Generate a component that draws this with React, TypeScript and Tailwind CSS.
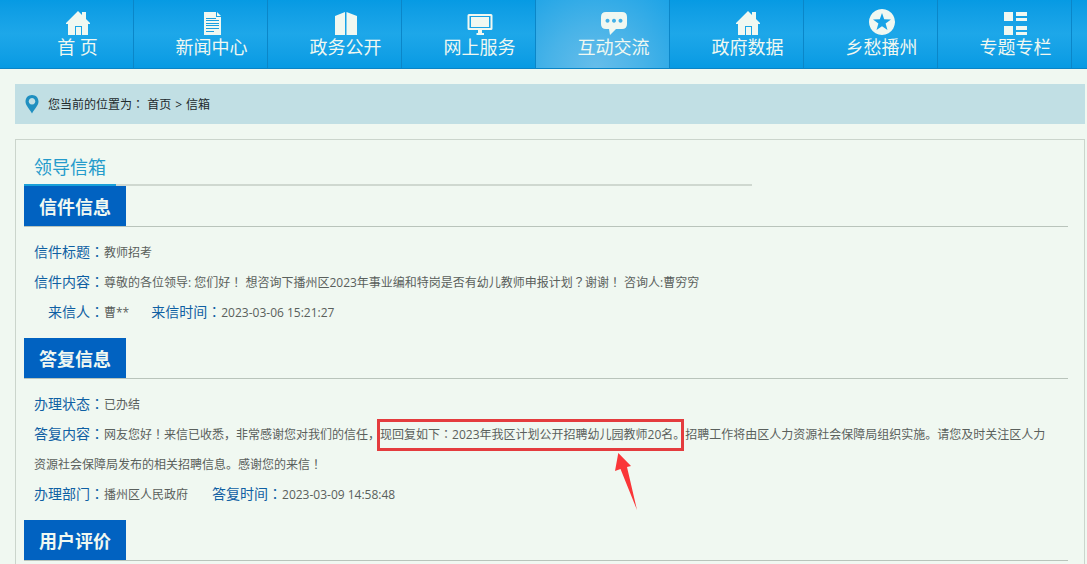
import { Fragment, type ReactNode } from "react";
import clsx from "clsx";

const HOME_ICON = (
  <path
    fillRule="evenodd"
    d="M13 2 L17 6 V3 H21 V10 L25 14 V15 H23 V26 H3 V15 H1 V14 Z M10 17 V26 H11 V18 H16 V26 H17 V17 Z"
  />
);

const NAV_ITEMS: { label: string; icon: ReactNode; active?: boolean }[] = [
  { label: "首 页", icon: HOME_ICON },
  {
    label: "新闻中心",
    icon: (
      <>
        <path d="M5 3 H17 V8 H22 V26 H5 Z M18 3 L22 7 H18 Z" />
        <path
          d="M7 9.5 H17 M7 11.5 H20 M7 14.5 H20 M7 16.5 H20 M7 19.5 H20 M7 22.5 H15"
          stroke="#1a9fe0"
          strokeWidth="1"
        />
      </>
    ),
  },
  {
    label: "政务公开",
    icon: <path d="M2 7 L12 3 V26 H2 Z M13.5 3 L24 7 V26 H13.5 Z" />,
  },
  {
    label: "网上服务",
    icon: (
      <>
        <path
          fillRule="evenodd"
          d="M2 5 H24 Q25.500 5 25.500 6.500 V19.500 Q25.500 21 24 21 H2 Q0.500 21 0.500 19.500 V6.500 Q0.500 5 2 5 Z M2.500 7 V19 H23.500 V7 Z"
        />
        <path d="M4 8 H22 V18 H4 Z M11 21 H15 V24 H17 V26 H9.500 V24 H11 Z" />
      </>
    ),
  },
  {
    label: "互动交流",
    active: true,
    icon: (
      <path
        fillRule="evenodd"
        d="M5 3 H21 Q26 3 26 8 V15 Q26 20 21 20 H15 L9 26 L8 20 H5 Q0 20 0 15 V8 Q0 3 5 3 Z M6.500 9.800 a2 2 0 1 0 0.010 0 Z M13 9.800 a2 2 0 1 0 0.010 0 Z M19.500 9.800 a2 2 0 1 0 0.010 0 Z"
      />
    ),
  },
  { label: "政府数据", icon: HOME_ICON },
  {
    label: "乡愁播州",
    icon: (
      <path
        fillRule="evenodd"
        d="M13 0 a13 13 0 1 0 0.010 0 Z M13 4 L15.200 10.200 L22 10.400 L16.600 14.500 L18.500 21 L13 17.200 L7.500 21 L9.400 14.500 L4 10.400 L10.800 10.200 Z"
      />
    ),
  },
  {
    label: "专题专栏",
    icon: (
      <path d="M1 3 H10 V12 H1 Z M13 3 H24 V7 H13 Z M13 9 H24 V12 H13 Z M1 17 H10 V26 H1 Z M13 17 H24 V21 H13 Z M13 23 H24 V26 H13 Z" />
    ),
  },
];

export default function App() {
  return (
    <div className="flex min-h-screen flex-col bg-[#f0f8f1] font-['Open_Sans','Noto_Sans_CJK_SC',sans-serif] text-xs text-[#5a605c]">
      <nav className="flex h-[69px] overflow-hidden border-b border-[#0a84c6] bg-linear-to-b from-[#069ae3] via-[#1da7e9] to-[#069ae3]">
        {NAV_ITEMS.map((item) => (
          <a
            key={item.label}
            href="#"
            className={clsx(
              "flex w-[134px] shrink-0 flex-col items-center border-r border-[#0b86c8] pt-[9px] pl-[22px] text-lg leading-6 text-[#f0f8f1]",
              item.active &&
                "bg-[radial-gradient(ellipse_at_45%_100%,#66bdea_0%,#48b3e8_45%,#1da3e6_100%)]",
            )}
          >
            <svg viewBox="0 0 26 26" className="h-[26px] w-[26px]" fill="currentColor" aria-hidden="true">
              {item.icon}
            </svg>
            {item.label}
          </a>
        ))}
      </nav>

      {/* Breadcrumb */}
      <div className="mt-[15px] mr-[2px] ml-[15px] flex h-10 items-center bg-[#c1dfe4] pl-[10px] text-[#222a2c]">
        <svg viewBox="0 0 14 20" className="mr-[9px] h-5 w-[14px]" aria-hidden="true">
          <path
            fill="#1f8fc0"
            fillRule="evenodd"
            d="M7 1 C10.800 1 13.500 3.800 13.500 7.500 C13.500 11.500 9.500 15 7 19.500 C4.500 15 0.500 11.500 0.500 7.500 C0.500 3.800 3.200 1 7 1 Z M7 4 a3.300 3.300 0 1 0 0.010 0 Z"
          />
        </svg>
        <p>
          <Zh text="您当前的位置为： " />
          <a href="#">首页</a>
          <span className="mx-1">&gt;</span>
          <a href="#">信箱</a>
        </p>
      </div>

      <main className="mt-[15px] mr-[2px] ml-[15px] flex-1 border border-b-0 border-[#cbd5cc] pr-4 pl-2">
        <div className="flex w-[728px] max-w-full border-b-2 border-[#cfd8d0] pt-[10px]">
          <h1 className="-mb-[2px] border-b-2 border-[#1aa0d8] px-[10px] text-lg leading-[34px] text-[#259bcb]">
            领导信箱
          </h1>
        </div>

        <Section title="信件信息">
          <p>
            <Label>信件标题：</Label>教师招考
          </p>
          <p>
            <Label>信件内容：</Label>
            <Zh text="尊敬的各位领导: 您们好！ 想咨询下播州区2023年事业编和特岗是否有幼儿教师申报计划？谢谢！ 咨询人:曹穷穷" />
          </p>
          <div className="flex gap-[22px] pl-[14px]">
            <p>
              <Label>来信人：</Label>曹**
            </p>
            <p>
              <Label>来信时间：</Label>2023-03-06 15:21:27
            </p>
          </div>
        </Section>

        <Section title="答复信息">
          <p>
            <Label>办理状态：</Label>已办结
          </p>
          <p>
            <Label>答复内容：</Label>
            <Zh text="网友您好！来信已收悉，非常感谢您对我们的信任，" />
            <Marked>
              <Zh text="现回复如下：2023年我区计划公开招聘幼儿园教师20名。" />
            </Marked>
            招聘工作将由区人力资源社会保障局组织实施。请您及时关注区人力
            <wbr />
            <Zh text="资源社会保障局发布的相关招聘信息。感谢您的来信！" />
          </p>
          <div className="flex gap-6">
            <p>
              <Label>办理部门：</Label>播州区人民政府
            </p>
            <p>
              <Label>答复时间：</Label>2023-03-09 14:58:48
            </p>
          </div>
        </Section>

        <Section title="用户评价" />
      </main>
    </div>
  );
}

function Section({ title, children }: { title: string; children?: ReactNode }) {
  return (
    <section>
      <div className="flex border-b border-[#b9c4bb]">
        <h2 className="bg-[#0162c1] px-[15px] pt-[2px] text-lg leading-[38px] font-bold text-[#f0f8f1]">
          {title}
        </h2>
      </div>
      {children && (
        <div className="pt-[11px] pr-[15px] pb-[10px] pl-[10px] leading-[30px]">{children}</div>
      )}
    </section>
  );
}

function Label({ children }: { children: string }) {
  return (
    <span className="text-sm leading-5 text-[#0f60a3]">
      <Zh text={children} />
    </span>
  );
}

// Colons and exclamation / question marks sit in the middle of their cell
function Zh({ text }: { text: string }) {
  return text
    .split(/([：！？])/)
    .filter(Boolean)
    .map((part, i) =>
      /[：！？]/.test(part) ? (
        <span key={i} className="font-['Noto_Sans_CJK_TC',sans-serif] leading-5">
          {part}
        </span>
      ) : (
        <Fragment key={i}>{part}</Fragment>
      ),
    );
}

function Marked({ children }: { children: ReactNode }) {
  return (
    <span className="relative inline-block">
      {children}
      <span className="absolute -top-px right-px -bottom-px -left-[3px] border-3 border-[#e43c3e]" />
      <svg
        viewBox="0 0 24 58"
        className="absolute top-[33px] left-[235px] h-[58px] w-6"
        fill="#fa3638"
        aria-hidden="true"
      >
        <path d="M3.300 0 L16 13 L12 14 L22 57 L5.500 16 L0 18 Z" />
      </svg>
    </span>
  );
}
